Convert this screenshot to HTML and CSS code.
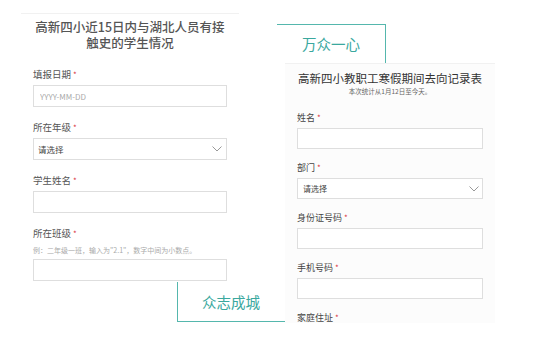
FILE: index.html
```html
<!DOCTYPE html>
<html lang="zh-CN">
<head>
  <meta charset="UTF-8" />
  <meta name="viewport" content="width=device-width, initial-scale=1.0"/>
  <title>万众一心 众志成城</title>
  <link rel="stylesheet" href="styles.css">
</head>
<body>

  <div class="stage">

    <!-- Left form: students -->
    <div class="col-left">
      <div class="form-card card-left">
        <h1>高新四小近15日内与湖北人员有接<br>触史的学生情况</h1>

        <div class="field">
          <label>填报日期<span class="req">*</span></label>
          <input type="text" placeholder="YYYY-MM-DD" />
        </div>

        <div class="field">
          <label>所在年级<span class="req">*</span></label>
          <div class="select">
            <span>请选择</span>
            <svg width="10" height="6" viewBox="0 0 10 6"><path d="M0.5 0.5 L5 5 L9.5 0.5" fill="none" stroke="#999" stroke-width="1"/></svg>
          </div>
        </div>

        <div class="field">
          <label>学生姓名<span class="req">*</span></label>
          <input type="text" />
        </div>

        <div class="field last">
          <label>所在班级<span class="req">*</span></label>
          <p class="hint">例：二年级一班，输入为"2.1"，数字中间为小数点。</p>
          <input type="text" />
        </div>
      </div>

      <div class="tag tag-bottom">众志成城</div>
    </div>

    <!-- Right form: staff -->
    <div class="col-right">
      <div class="tag tag-top">万众一心</div>

      <div class="form-card card-right">
        <h2>高新四小教职工寒假期间去向记录表</h2>
        <p class="sub">本次统计从1月12日至今天。</p>

        <div class="field">
          <label>姓名<span class="req">*</span></label>
          <input type="text" />
        </div>

        <div class="field">
          <label>部门<span class="req">*</span></label>
          <div class="select">
            <span>请选择</span>
            <svg width="10" height="6" viewBox="0 0 10 6"><path d="M0.5 0.5 L5 5 L9.5 0.5" fill="none" stroke="#999" stroke-width="1"/></svg>
          </div>
        </div>

        <div class="field">
          <label>身份证号码<span class="req">*</span></label>
          <input type="text" />
        </div>

        <div class="field">
          <label>手机号码<span class="req">*</span></label>
          <input type="text" />
        </div>

        <div class="field last">
          <label>家庭住址<span class="req">*</span></label>
        </div>
      </div>
    </div>

  </div>

</body>
</html>
```

FILE: styles.css
```css
* {
  box-sizing: border-box;
  margin: 0;
  padding: 0;
}

html, body {
  font-family: "Noto Sans CJK SC", "Noto Sans", sans-serif;
  background: #fff;
  color: #444;
}

.stage {
  display: flex;
  align-items: flex-start;
}

/* Columns */
.col-left {
  width: 256px;
  margin-left: 21px;
  padding-top: 13px;
}

.col-right {
  width: 218px;
  padding-top: 24px;
}

/* Form cards */
.form-card {
  border-top: 1px solid #f1f1f1;
}

.card-left {
  width: 218px;
  padding: 5px 12px 1px;
}

.card-right {
  width: 210px;
  margin-left: 8px;
  padding: 7px 12px 0;
  background: #fcfcfc;
}

.card-left h1 {
  font-size: 12.5px;
  line-height: 16px;
  font-weight: 500;
  color: #555;
  text-align: center;
  margin-bottom: 17px;
}

.card-right h2 {
  font-size: 11.5px;
  line-height: 14px;
  font-weight: 400;
  color: #333;
  text-align: center;
  white-space: nowrap;
}

.card-right .sub {
  font-size: 6.5px;
  line-height: 8px;
  color: #666;
  text-align: center;
  margin-top: 2px;
  margin-bottom: 17px;
}

/* Fields */
.field {
  margin-bottom: 14px;
}

.card-right .field {
  margin-bottom: 13px;
}

.field.last {
  margin-bottom: 0;
}

.field label {
  display: block;
  font-size: 9.5px;
  line-height: 12px;
  color: #555;
  margin-bottom: 4px;
}

.card-right .field label {
  font-size: 9px;
  line-height: 11px;
  color: #444;
  margin-bottom: 5px;
}

.req {
  color: #d9363e;
  font-size: 8px;
  margin-left: 2px;
}

.hint {
  font-size: 7px;
  line-height: 10px;
  color: #aaa;
  margin: 5px 0 4px;
  white-space: nowrap;
}

.field input,
.select {
  display: block;
  width: 194px;
  height: 22px;
  border: 1px solid #dedede;
  background: #fff;
  outline: none;
  font-family: inherit;
  font-size: 8px;
  color: #444;
  padding: 0 6px;
}

.card-right .field input,
.card-right .select {
  width: 186px;
  height: 21px;
}

.field input::placeholder {
  color: #aaa;
}

.select {
  display: flex;
  align-items: center;
  justify-content: space-between;
  padding: 0 4px 0 4px;
  font-size: 8.5px;
}

.card-right .select {
  padding: 0 3px 0 5px;
  font-size: 8px;
}

/* Teal tags */
.tag {
  color: #3aa89e;
  font-size: 14.5px;
  line-height: 18px;
  display: flex;
  align-items: center;
}

.tag-top {
  width: 109px;
  height: 39px;
  border-top: 1.5px solid #55b7ad;
  border-right: 1.5px solid #55b7ad;
  padding-left: 25px;
}

.tag-bottom {
  width: 108px;
  height: 40px;
  margin-left: 156px;
  border-left: 1.5px solid #55b7ad;
  border-bottom: 1.5px solid #55b7ad;
  padding-left: 24px;
}
```
